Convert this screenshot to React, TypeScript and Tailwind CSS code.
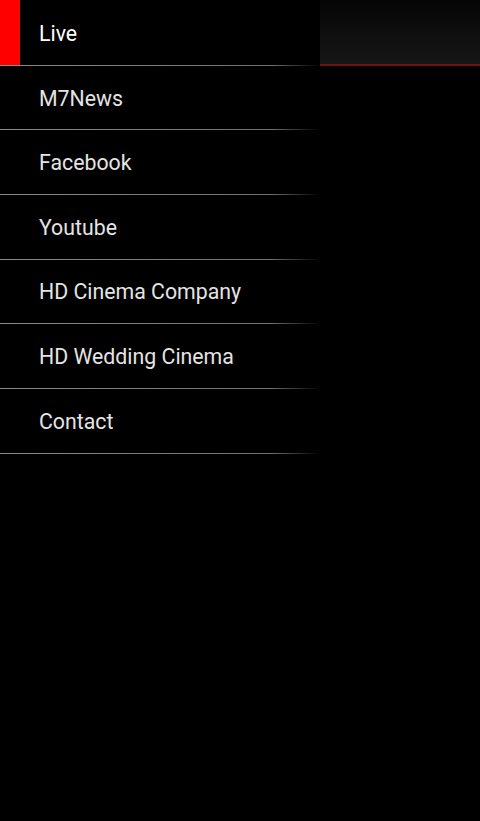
import React from "react";

const items = ["Live", "M7News", "Facebook", "Youtube", "HD Cinema Company", "HD Wedding Cinema", "Contact"];

export default function App() {
  return (
    <div className="flex h-[821px] w-[480px] overflow-hidden bg-black font-['Roboto',sans-serif]">
      {/* Drawer */}
      <nav className="flex w-[320px] flex-col bg-black pt-px">
        {items.map((label, i) => (
          <div key={label} className="flex h-[64.67px] flex-col">
            <div className="flex flex-1 items-center">
              <div className={i === 0 ? "-mt-px h-[calc(100%+1px)] w-[20px] bg-[#ff0000]" : "h-full w-[20px]"} />
              <span className={i === 0 ? "pl-[19px] pt-[2px] text-[21.3px] text-white" : "pl-[19px] pt-[2px] text-[21.3px] text-[#e4e4e4]"}>
                {label}
              </span>
            </div>
            <div className="h-px bg-gradient-to-r from-[#8a8a8a] via-[#707070] via-85% to-transparent" />
          </div>
        ))}
      </nav>

      {/* Page behind the drawer */}
      <div className="flex flex-1 flex-col">
        <div className="h-[64px] bg-gradient-to-b from-[#050505] via-[#0f0f0f] to-[#161616]" />
        <div className="h-[2px] bg-[#6e1212]" />
      </div>
    </div>
  );
}
